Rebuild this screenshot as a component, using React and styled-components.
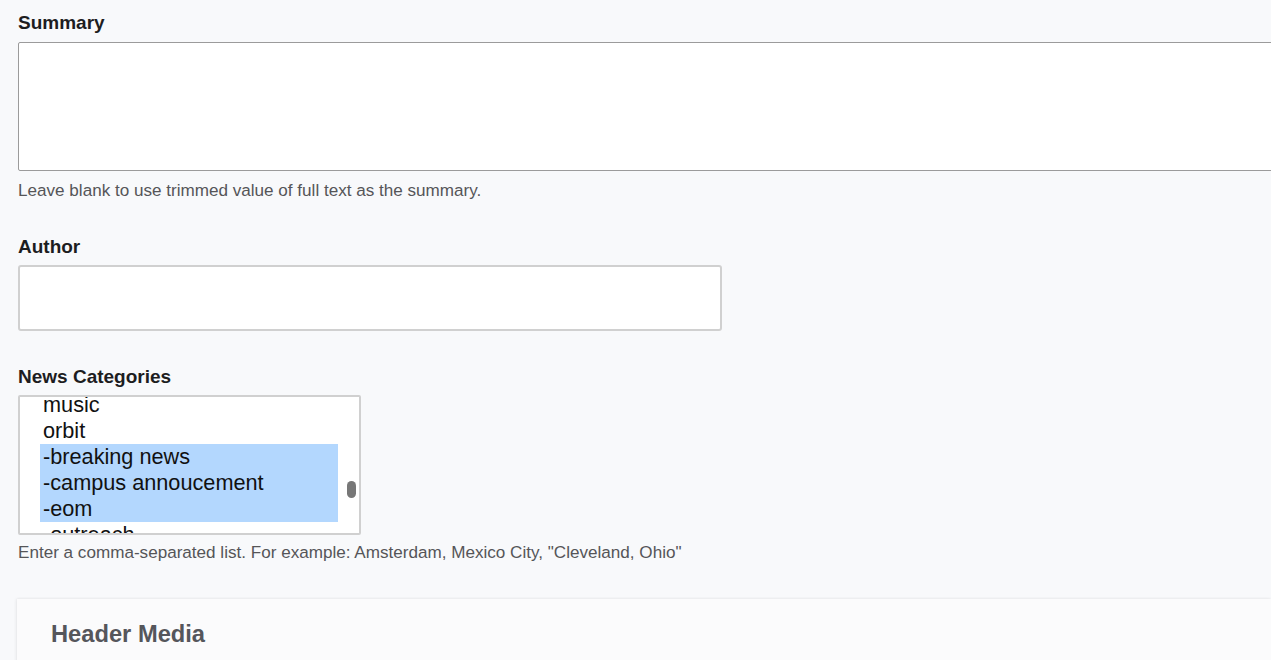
import styled, { createGlobalStyle } from "styled-components";

const GlobalStyle = createGlobalStyle`
  html, body {
    margin: 0;
    padding: 0;
    background: #f8f9fb;
    overflow: hidden;
  }
  body {
    font-family: "Liberation Sans", Arial, Helvetica, sans-serif;
    color: #1a1a1a;
  }
`;

const Page = styled.div`
  padding: 12px 0 0 18px;
  width: 1271px;
  height: 660px;
  box-sizing: border-box;
  overflow: hidden;
`;

const Field = styled.div`
  display: flex;
  flex-direction: column;
  align-items: flex-start;
  margin-bottom: ${(props) => props.gap || 35}px;
`;

const Label = styled.label`
  font-size: 19px;
  line-height: 22px;
  font-weight: 700;
  color: #1d1d1f;
  margin-bottom: ${(props) => props.gap || 8}px;
`;

const TextArea = styled.textarea`
  width: 1270px;
  height: 129px;
  box-sizing: border-box;
  border: 1px solid #9b9b9b;
  border-radius: 2px;
  background: #fff;
  resize: none;
  margin: 0;
  display: block;
`;

const TextInput = styled.input`
  width: 704px;
  height: 66px;
  box-sizing: border-box;
  border: 2px solid #d0d0d0;
  border-radius: 3px;
  background: #fff;
  margin: 0;
  display: block;
`;

const Help = styled.div`
  font-size: 17.1px;
  line-height: 20px;
  color: #555558;
  margin-top: ${(props) => props.gap || 10}px;
`;

const SelectBox = styled.div`
  position: relative;
  width: 343px;
  height: 140px;
  box-sizing: border-box;
  border: 2px solid #d0d0d0;
  border-radius: 2px;
  background: #fff;
  overflow: hidden;
  padding-left: 20px;
`;

const OptionList = styled.div`
  width: 298px;
  margin-top: -5px;
`;

const Option = styled.div`
  height: 26px;
  line-height: 26px;
  font-size: 21.7px;
  padding-left: 3px;
  color: #111;
  white-space: nowrap;
  background: ${(props) => (props.selected ? "#b3d7fe" : "transparent")};
`;

const Thumb = styled.div`
  position: absolute;
  left: 327px;
  top: 84px;
  width: 9px;
  height: 17px;
  border-radius: 5px;
  background: #777;
`;

const Panel = styled.section`
  margin-left: -1px;
  background: #fbfbfc;
  box-shadow: -1px 0 3px rgba(0, 0, 0, 0.07), 0 -1px 2px rgba(0, 0, 0, 0.03);
  padding: 21px 0 20px 34px;
`;

const PanelTitle = styled.h2`
  margin: 0;
  font-size: 23.7px;
  line-height: 28px;
  font-weight: 700;
  color: #55565b;
`;

const categories = [
  { name: "music" },
  { name: "orbit" },
  { name: "-breaking news", selected: true },
  { name: "-campus annoucement", selected: true },
  { name: "-eom", selected: true },
  { name: "-outreach" },
];

const App = () => (
  <>
    <GlobalStyle />
    <Page>
      <Field>
        <Label>Summary</Label>
        <TextArea />
        <Help>Leave blank to use trimmed value of full text as the summary.</Help>
      </Field>

      <Field>
        <Label gap={7}>Author</Label>
        <TextInput type="text" />
      </Field>

      <Field gap={36}>
        <Label gap={7}>News Categories</Label>
        <SelectBox>
          <OptionList>
            {categories.map((c) => (
              <Option key={c.name} selected={c.selected}>
                {c.name}
              </Option>
            ))}
          </OptionList>
          <Thumb />
        </SelectBox>
        <Help gap={8}>
          Enter a comma-separated list. For example: Amsterdam, Mexico City, "Cleveland, Ohio"
        </Help>
      </Field>

      <Panel>
        <PanelTitle>Header Media</PanelTitle>
      </Panel>
    </Page>
  </>
);

export default App;
